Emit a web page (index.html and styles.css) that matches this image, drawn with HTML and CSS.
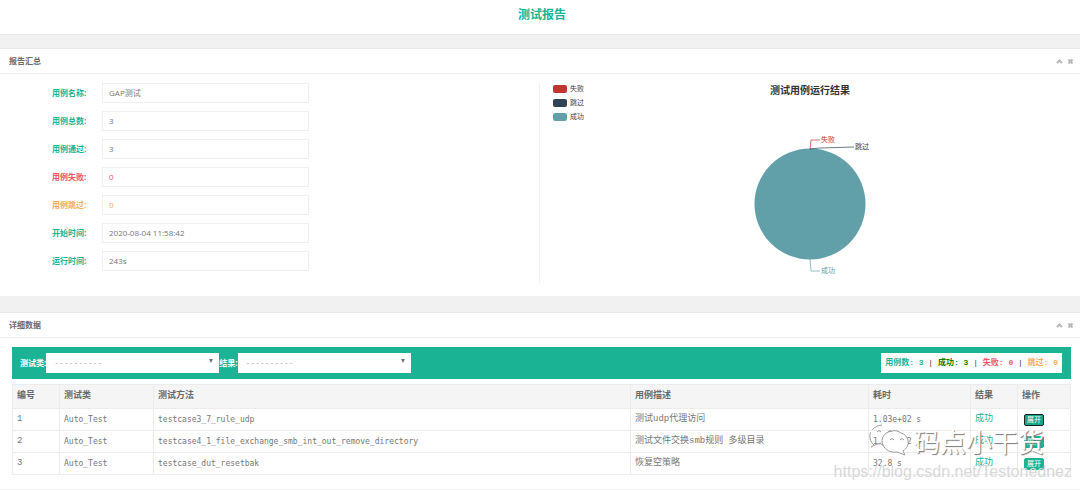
FILE: index.html
```html
<!DOCTYPE html>
<html lang="zh-CN">
<head>
<meta charset="utf-8">
<title>测试报告</title>
<link rel="stylesheet" href="styles.css">
</head>
<body>
<header class="page-head"><h1>测试报告</h1></header>
<main>
<section class="panel summary">
  <div class="panel-head">
    <h2>报告汇总</h2>
    <div class="tools">
      <button type="button" aria-label="收起"><svg viewBox="0 0 7 7"><path d="M1 5l2.500-2.500L6 5" /></svg></button>
      <button type="button" aria-label="关闭"><svg viewBox="0 0 7 7"><path d="M1.500 1.500l4 4M5.500 1.500l-4 4" /></svg></button>
    </div>
  </div>
  <div class="summary-body">
    <form class="facts">
      <label for="f1">用例名称:</label><input id="f1" value="GAP测试" readonly>
      <label for="f2">用例总数:</label><input id="f2" value="3" readonly>
      <label for="f3">用例通过:</label><input id="f3" value="3" readonly>
      <label for="f4" class="fail">用例失败:</label><input id="f4" class="fail" value="0" readonly>
      <label for="f5" class="skip">用例跳过:</label><input id="f5" class="skip" value="0" readonly>
      <label for="f6">开始时间:</label><input id="f6" value="2020-08-04 11:58:42" readonly>
      <label for="f7">运行时间:</label><input id="f7" value="243s" readonly>
    </form>
    <div class="chart">
      <ul class="legend">
        <li><i class="sw sw-fail"></i>失败</li>
        <li><i class="sw sw-skip"></i>跳过</li>
        <li><i class="sw sw-pass"></i>成功</li>
      </ul>
      <div class="plot">
        <h3>测试用例运行结果</h3>
        <svg class="pie" viewBox="0 0 140 156" role="img" aria-label="测试用例运行结果">
          <circle cx="70" cy="77" r="55.500" fill="#61a0a8"/>
          <path d="M70 22l1-9h9" stroke="#c23531" stroke-width=".7"/>
          <path d="M70 22l10-1 34-1" stroke="#2f4554" stroke-width=".7"/>
          <path d="M70 132l1 12h9" stroke="#61a0a8" stroke-width=".7"/>
          <text x="81" y="15" fill="#c23531">失败</text>
          <text x="115" y="22" fill="#2f4554">跳过</text>
          <text x="81" y="146" fill="#61a0a8">成功</text>
        </svg>
      </div>
    </div>
  </div>
</section>
<section class="panel details">
  <div class="panel-head">
    <h2>详细数据</h2>
    <div class="tools">
      <button type="button" aria-label="收起"><svg viewBox="0 0 7 7"><path d="M1 5l2.500-2.500L6 5" /></svg></button>
      <button type="button" aria-label="关闭"><svg viewBox="0 0 7 7"><path d="M1.500 1.500l4 4M5.500 1.500l-4 4" /></svg></button>
    </div>
  </div>
  <div class="details-body">
    <div class="filter">
      <label for="cls">测试类:</label>
      <span class="pick"><select id="cls"><option>----------</option></select></span>
      <label for="res">结果:</label>
      <span class="pick"><select id="res"><option>----------</option></select></span>
      <p class="totals"><b class="c-all">用例数: 3</b> | <b class="c-pass">成功: 3</b> | <b class="fail">失败: 0</b> | <b class="skip">跳过: 0</b></p>
    </div>
    <table>
      <colgroup><col class="w-no"><col class="w-cls"><col class="w-method"><col class="w-desc"><col class="w-time"><col class="w-res"><col class="w-op"></colgroup>
      <thead><tr><th>编号</th><th>测试类</th><th>测试方法</th><th>用例描述</th><th>耗时</th><th>结果</th><th>操作</th></tr></thead>
      <tbody>
        <tr><td>1</td><td class="code">Auto_Test</td><td class="code">testcase3_7_rule_udp</td><td>测试udp代理访问</td><td class="code">1.03e+02 s</td><td class="ok">成功</td><td><button type="button" class="open active">展开</button></td></tr>
        <tr><td>2</td><td class="code">Auto_Test</td><td class="code">testcase4_1_file_exchange_smb_int_out_remove_directory</td><td>测试文件交换smb规则 多级目录</td><td class="code">1.03e+02 s</td><td class="ok">成功</td><td><button type="button" class="open">展开</button></td></tr>
        <tr><td>3</td><td class="code">Auto_Test</td><td class="code">testcase_dut_resetbak</td><td>恢复空策略</td><td class="code">32.8 s</td><td class="ok">成功</td><td><button type="button" class="open">展开</button></td></tr>
      </tbody>
    </table>
  </div>
  <div class="brand">
    <svg viewBox="0 0 46 36" aria-hidden="true">
      <path d="M7 22C-1 15 3 3 15 2" stroke-dasharray="14 3"/>
      <path class="bubble" d="M34 10c-3-2-6-3-9-2-8 1-12 8-9 14 2 5 8 8 14 7l8 3-2-4c4-3 6-6 5-11-1-3-3-6-7-7z"/>
      <path d="M4 24l6-3q4-1 6 1M10 9q2-3 4 0M21 9q2-3 4 0M23 17q2-3 4 0M33 17q2-3 4 0"/>
    </svg>
    <span>码点小干货</span>
  </div>
  <div class="source">https://blog.csdn.net/Testonednez</div>
</section>
</main>
</body>
</html>
```

FILE: styles.css
```css
* { box-sizing: border-box; }
body {
  margin: 0;
  background: #f1f1f2;
  color: #676a6c;
  font: 8px/12px "Open Sans", "Noto Sans CJK SC", sans-serif;
}
h1, h2, h3, p, ul { margin: 0; padding: 0; }
button, input, select { font: inherit; color: inherit; margin: 0; }
.page-head {
  background: #fff;
  border-bottom: 1px solid #e7eaec;
  padding: 6px 0 10px 4px;
  text-align: center;
}
h1 { font-size: 12px; line-height: 18px; color: #1ab394; }
main { display: flex; flex-direction: column; gap: 16px; padding-top: 13px; }
.panel { background: #fff; position: relative; border-top: 1px solid #e7eaec; }
.panel-head {
  display: flex;
  justify-content: space-between;
  align-items: center;
  height: 25px;
  padding: 0 6px 0 9px;
  border-bottom: 1px solid #eee;
}
h2 { font-size: 8px; line-height: 12px; font-weight: 600; }
.tools { display: flex; gap: 4px; }
.tools button { display: flex; padding: 0; border: 0; background: none; }
.tools svg { width: 7px; height: 7px; fill: none; stroke: #b8b8b8; stroke-width: 2; }
.summary-body { display: grid; grid-template-columns: 1fr 1fr; padding: 9px 0 13px; }
.facts {
  display: grid;
  grid-template-columns: 50px 207px;
  grid-auto-rows: 20px;
  row-gap: 8px;
  align-items: center;
  align-content: start;
  padding-left: 52px;
  border-right: 1px solid #f1f1f1;
}
.facts label { font-weight: 700; color: #1ab394; }
.facts input {
  width: 100%;
  height: 20px;
  padding: 0 6px 1px;
  border: 1px solid #eef0f1;
  background: #fff;
  color: #777;
  outline: 0;
}
.facts .fail, .fail { color: #ed5565; }
.facts .skip, .skip { color: #f8ac59; }
.chart { display: flex; height: 200px; padding-left: 13px; }
.legend { list-style: none; display: flex; flex-direction: column; gap: 2px; width: 100px; color: #444; font-size: 7px; }
.legend li { display: flex; align-items: center; gap: 3px; }
.sw { width: 14px; height: 8px; border-radius: 2px; }
.sw-fail { background: #c23531; }
.sw-skip { background: #2f4554; }
.sw-pass { background: #61a0a8; }
.plot { flex: 1; display: flex; flex-direction: column; align-items: center; padding-right: 113px; gap: 29px; }
h3 { font-size: 10px; line-height: 15px; color: #333; }
.pie { width: 140px; height: 156px; overflow: visible; fill: none; font-size: 7px; }
.details-body { padding: 9px 9px 14px 12px; }
.filter {
  display: flex;
  align-items: center;
  height: 32px;
  padding: 0 9px 0 8px;
  margin-bottom: 5px;
  background: #1ab394;
}
.filter label { color: #fff; font-weight: 700; white-space: nowrap; }
.pick { position: relative; width: 173px; height: 20px; }
.pick::after {
  content: "";
  position: absolute;
  right: 6px;
  top: 6px;
  border: 2px solid transparent;
  border-top: 4px solid #777;
}
.pick select {
  appearance: none;
  width: 100%;
  height: 20px;
  padding: 0 8px;
  border: 0;
  border-radius: 0;
  background: #fff;
  color: #aaa;
  font-family: "Liberation Mono", monospace;
}
.totals {
  margin-left: auto;
  padding: 4px;
  background: #fff;
  color: #333;
  white-space: nowrap;
  font-family: "Liberation Mono", "Noto Sans CJK SC", monospace;
}
.c-all { color: #1ab394; }
.c-pass { color: #008000; }
table {
  width: 100%;
  table-layout: fixed;
  border-collapse: collapse;
  font: 9px/13px "Liberation Mono", "Noto Sans CJK SC", monospace;
}
th, td { border: 1px solid #ececec; padding: 0 4px; height: 22px; text-align: left; white-space: nowrap; }
td { color: #777; }
th { background: #f5f5f6; font-weight: 600; height: 24px; }
.code { font-family: "DejaVu Sans Mono", monospace; font-size: 8px; }
.w-no { width: 47px; }
.w-cls { width: 94px; }
.w-desc { width: 238px; }
.w-time { width: 102px; }
.w-res { width: 47px; }
.w-op { width: 53px; }
td.ok { color: #1ab394; }
.open {
  display: block;
  margin-left: 2px;
  padding: 0 2px;
  border: 1px solid #1ab394;
  border-radius: 2px;
  background: #1ab394;
  color: #fff;
  font-size: 7px;
  line-height: 10px;
}
.open.active { border-color: #222; background: #18a689; }
.brand {
  position: absolute;
  right: 36px;
  bottom: 30px;
  display: flex;
  align-items: center;
  font: 26px/36px "Noto Sans CJK SC", sans-serif;
  color: #fff;
  text-shadow: 1px 1px 1px #777;
}
.brand svg { width: 48px; height: 36px; fill: none; stroke: #999; stroke-width: 1; }
.brand .bubble { fill: #fff; }
.source {
  position: absolute;
  right: 8px;
  bottom: 7px;
  font: 16px/20px "Liberation Sans", sans-serif;
  color: #d8d8d8;
}
```
